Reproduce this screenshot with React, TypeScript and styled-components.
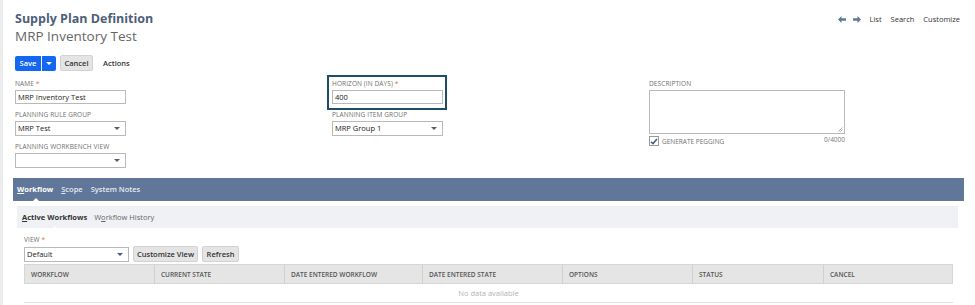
import React from "react";
import styled, { createGlobalStyle } from "styled-components";

const Global = createGlobalStyle`
  html, body { margin: 0; padding: 0; background: #fff; }
  body { font-family: "Open Sans", "Liberation Sans", sans-serif; color: #333; }
  * { box-sizing: border-box; }
`;

const Page = styled.div`
  width: 975px;
  height: 305px;
  border-left: 3px solid #ececec;
  padding: 10px 0 0 12px;
  overflow: hidden;
`;

const HeaderRow = styled.div`
  display: flex;
  justify-content: space-between;
  align-items: flex-start;
  padding-right: 15px;
`;

const TitleBlock = styled.div`
  display: flex;
  flex-direction: column;
`;

const Title = styled.h1`
  margin: 0;
  font-size: 12.5px;
  line-height: 17px;
  font-weight: 700;
  color: #4d5f79;
`;

const Subtitle = styled.h2`
  margin: 0;
  font-size: 13.5px;
  line-height: 18px;
  font-weight: 400;
  color: #666;
`;

const NavLinks = styled.div`
  display: flex;
  align-items: center;
  gap: 9px;
  padding-top: 4px;
  font-size: 7.5px;
  color: #333;
`;

const ArrowIcon = styled.svg`
  width: 8px;
  height: 7px;
  display: block;
`;

const ButtonRow = styled.div`
  display: flex;
  align-items: center;
  margin-top: 10px;
  gap: 4px;
`;

const SplitButton = styled.div`
  display: flex;
  gap: 1px;
  height: 15px;
`;

const PrimaryButton = styled.button<{ narrow?: boolean }>`
  border: none;
  background: #1467f0;
  color: #fff;
  font-family: inherit;
  font-size: 7.5px;
  font-weight: 600;
  height: 15px;
  padding: 0;
  border-radius: ${(p) => (p.narrow ? "0 2px 2px 0" : "2px 0 0 2px")};
  display: flex;
  align-items: center;
  justify-content: center;
  width: ${(p) => (p.narrow ? "14px" : "26px")};
`;

const GreyButton = styled.button<{ w: number }>`
  border: 1px solid #d2d2d2;
  background: #e4e4e4;
  color: #333;
  font-family: inherit;
  font-size: 7.5px;
  font-weight: 600;
  height: 16px;
  width: ${(p) => p.w}px;
  padding: 0;
  border-radius: 2px;
`;

const TextAction = styled.span`
  font-size: 7.5px;
  font-weight: 600;
  color: #333;
  margin-left: 6px;
`;

const FormGrid = styled.div`
  display: grid;
  grid-template-columns: 317px 317px 200px;
  margin-top: 9px;
`;

const Column = styled.div`
  display: flex;
  flex-direction: column;
  gap: 7px;
`;

const Field = styled.div<{ focused?: boolean }>`
  display: flex;
  flex-direction: column;
  gap: 2px;
  ${(p) =>
    p.focused
      ? `border: 2px solid #1f4d68; margin: -5px 0 -6px -5px; padding: 3px 2px 4px 3px; width: 120px;`
      : ``}
`;

const Label = styled.label`
  font-size: 6.5px;
  line-height: 8px;
  color: #6f6f6f;
  text-transform: uppercase;
  letter-spacing: 0.1px;
`;

const Req = styled.span`
  color: #e0753a;
`;

const TextInput = styled.div<{ w: number }>`
  width: ${(p) => p.w}px;
  height: 14px;
  border: 1px solid #b9b9b9;
  background: #fff;
  font-size: 7.5px;
  line-height: 12px;
  padding-left: 2px;
  color: #222;
`;

const Select = styled.div<{ w: number }>`
  width: ${(p) => p.w}px;
  height: 15px;
  border: 1px solid #b9b9b9;
  background: #fff;
  font-size: 7.5px;
  line-height: 13px;
  padding-left: 2px;
  color: #222;
  display: flex;
  justify-content: space-between;
  align-items: center;
`;

const Caret = styled.span<{ light?: boolean }>`
  width: 0;
  height: 0;
  border-left: 3px solid transparent;
  border-right: 3px solid transparent;
  border-top: 3px solid ${(p) => (p.light ? "#fff" : "#4d5f79")};
  margin-right: ${(p) => (p.light ? "0" : "5px")};
`;

const TextArea = styled.div`
  width: 196px;
  height: 44px;
  border: 1px solid #b9b9b9;
  position: relative;
`;

const Grip = styled.svg`
  position: absolute;
  right: 1px;
  bottom: 1px;
  width: 5px;
  height: 5px;
`;

const UnderArea = styled.div`
  width: 196px;
  display: flex;
  justify-content: space-between;
  align-items: flex-start;
  margin-top: -2px;
`;

const Counter = styled.div`
  font-size: 6.5px;
  line-height: 8px;
  color: #777;
  padding-top: 2px;
`;

const CheckRow = styled.div`
  display: flex;
  align-items: center;
  gap: 3px;
  padding-top: 2px;
`;

const CheckBox = styled.span`
  width: 10px;
  height: 10px;
  border: 1px solid #9a9a9a;
  background: #fff;
  display: flex;
  align-items: center;
  justify-content: center;
`;

const CheckLabel = styled.span`
  font-size: 6.5px;
  color: #6f6f6f;
`;

const TabBar = styled.div`
  margin-top: 10px;
  margin-left: -2px;
  width: 951px;
  height: 23px;
  background: #607799;
  display: flex;
  align-items: center;
  gap: 8px;
  padding-left: 4px;
`;

const Tab = styled.span<{ active?: boolean }>`
  position: relative;
  font-size: 7.5px;
  line-height: 11px;
  font-weight: ${(p) => (p.active ? 700 : 600)};
  color: ${(p) => (p.active ? "#fff" : "#e6ebf2")};
  ${(p) =>
    p.active
      ? `&::after { content: ""; position: absolute; left: 16px; bottom: -6px; border-left: 3px solid transparent; border-right: 3px solid transparent; border-bottom: 3px solid #fff; }`
      : ``}
`;

const Acc = styled.span`
  text-decoration: underline;
`;

const SubTabBar = styled.div`
  margin: 5px 0 0 2px;
  width: 941px;
  height: 22px;
  background: #eff1f5;
  display: flex;
  align-items: center;
  gap: 7px;
  padding-left: 5px;
`;

const SubTab = styled.span<{ active?: boolean }>`
  position: relative;
  font-size: 7.5px;
  line-height: 11px;
  font-weight: ${(p) => (p.active ? 700 : 400)};
  color: ${(p) => (p.active ? "#333" : "#666")};
  ${(p) =>
    p.active
      ? `&::after { content: ""; position: absolute; left: 50%; margin-left: -3px; bottom: -6px; border-left: 3px solid transparent; border-right: 3px solid transparent; border-bottom: 3px solid #fff; }`
      : ``}
`;

const ListArea = styled.div`
  padding: 8px 0 0 9px;
  display: flex;
  flex-direction: column;
`;

const ViewRow = styled.div`
  display: flex;
  align-items: center;
  gap: 4px;
  margin-top: 2px;
`;

const Table = styled.div`
  margin-top: 2px;
  width: 929px;
  border-bottom: 1px solid #e2e2e2;
`;

const HeadRow = styled.div`
  display: grid;
  grid-template-columns: 129px 130px 138px 140px 130px 131px 131px;
  background: #e5e5e5;
  border: 1px solid #d6d6d6;
  height: 20px;
`;

const HeadCell = styled.div`
  font-size: 6.5px;
  font-weight: 600;
  color: #555;
  text-transform: uppercase;
  display: flex;
  align-items: center;
  padding-left: 6px;
  & + & { border-left: 1px solid #d0d0d0; }
`;

const EmptyRow = styled.div`
  height: 18px;
  display: flex;
  align-items: center;
  justify-content: center;
  font-size: 7.5px;
  color: #b3b3b3;
`;

const headers = [
  "Workflow",
  "Current State",
  "Date Entered Workflow",
  "Date Entered State",
  "Options",
  "Status",
  "Cancel",
];

export default function App() {
  return (
    <>
      <Global />
      <Page>
        <HeaderRow>
          <TitleBlock>
            <Title>Supply Plan Definition</Title>
            <Subtitle>MRP Inventory Test</Subtitle>
          </TitleBlock>
          <NavLinks>
            <ArrowIcon viewBox="0 0 8 7">
              <path d="M0 3.5 L3.5 0 V2.3 H8 V4.7 H3.5 V7 Z" fill="#607799" />
            </ArrowIcon>
            <ArrowIcon viewBox="0 0 8 7" style={{ marginLeft: -2 }}>
              <path d="M8 3.5 L4.5 0 V2.3 H0 V4.7 H4.5 V7 Z" fill="#607799" />
            </ArrowIcon>
            <span>List</span>
            <span>Search</span>
            <span>Customize</span>
          </NavLinks>
        </HeaderRow>

        <ButtonRow>
          <SplitButton>
            <PrimaryButton>Save</PrimaryButton>
            <PrimaryButton narrow>
              <Caret light />
            </PrimaryButton>
          </SplitButton>
          <GreyButton w={33}>Cancel</GreyButton>
          <TextAction>Actions</TextAction>
        </ButtonRow>

        <FormGrid>
          <Column>
            <Field>
              <Label>
                Name <Req>*</Req>
              </Label>
              <TextInput w={111}>MRP Inventory Test</TextInput>
            </Field>
            <Field>
              <Label>Planning Rule Group</Label>
              <Select w={111}>
                MRP Test <Caret />
              </Select>
            </Field>
            <Field>
              <Label>Planning Workbench View</Label>
              <Select w={111}>
                <span />
                <Caret />
              </Select>
            </Field>
          </Column>
          <Column>
            <Field focused>
              <Label>
                Horizon (in days) <Req>*</Req>
              </Label>
              <TextInput w={111}>400</TextInput>
            </Field>
            <Field>
              <Label>Planning Item Group</Label>
              <Select w={111}>
                MRP Group 1 <Caret />
              </Select>
            </Field>
          </Column>
          <Column>
            <Field>
              <Label>Description</Label>
              <TextArea>
                <Grip viewBox="0 0 5 5">
                  <path d="M4.5 0.5 L0.5 4.5 M4.5 2.5 L2.5 4.5" stroke="#888" strokeWidth="0.7" />
                </Grip>
              </TextArea>
              <UnderArea>
                <CheckRow>
                  <CheckBox>
                    <svg width="8" height="7" viewBox="0 0 8 7">
                      <path d="M1 3.8 L3 5.6 L7 1" stroke="#4d5f79" strokeWidth="1.6" fill="none" />
                    </svg>
                  </CheckBox>
                  <CheckLabel>GENERATE PEGGING</CheckLabel>
                </CheckRow>
                <Counter>0/4000</Counter>
              </UnderArea>
            </Field>
          </Column>
        </FormGrid>

        <TabBar>
          <Tab active>
            <Acc>W</Acc>orkflow
          </Tab>
          <Tab>
            <Acc>S</Acc>cope
          </Tab>
          <Tab>System Notes</Tab>
        </TabBar>
        <SubTabBar>
          <SubTab active>
            <Acc>A</Acc>ctive Workflows
          </SubTab>
          <SubTab>
            W<Acc>o</Acc>rkflow History
          </SubTab>
        </SubTabBar>

        <ListArea>
          <Label>
            View <Req>*</Req>
          </Label>
          <ViewRow>
            <Select w={105}>
              Default <Caret />
            </Select>
            <GreyButton w={65}>Customize View</GreyButton>
            <GreyButton w={37}>Refresh</GreyButton>
          </ViewRow>
          <Table>
            <HeadRow>
              {headers.map((h) => (
                <HeadCell key={h}>{h}</HeadCell>
              ))}
            </HeadRow>
            <EmptyRow>No data available</EmptyRow>
          </Table>
        </ListArea>
      </Page>
    </>
  );
}
